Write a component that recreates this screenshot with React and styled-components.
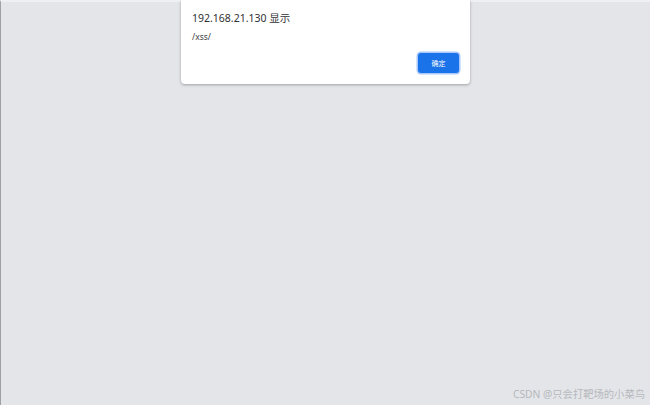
import React from 'react';
import styled, { createGlobalStyle } from 'styled-components';

const Global = createGlobalStyle`
  html, body {
    margin: 0;
    padding: 0;
    width: 650px;
    height: 405px;
    overflow: hidden;
    font-family: "Noto Sans", "Noto Sans CJK SC", sans-serif;
  }
`;

const Page = styled.div`
  position: relative;
  width: 650px;
  height: 405px;
  background: #e4e5e9;
  border-left: 1px solid #9ea1a6;
  border-top: 2px solid #eef0f2;
  box-sizing: border-box;
  display: flex;
  justify-content: flex-start;
`;

const Dialog = styled.div`
  margin-left: 180px;
  width: 289px;
  height: 84px;
  margin-top: -2px;
  background: #fff;
  border-radius: 0 0 4px 4px;
  box-shadow: 0 1px 3px rgba(0, 0, 0, 0.3);
  padding: 11px 10px 0 11px;
  box-sizing: border-box;
  display: flex;
  flex-direction: column;
`;

const Title = styled.div`
  font-family: "Noto Sans", "Noto Sans CJK SC", sans-serif;
  font-size: 10.5px;
  color: #303134;
  line-height: 14px;
`;

const Message = styled.div`
  font-family: "Noto Sans", sans-serif;
  font-size: 8.5px;
  color: #3c4043;
  margin-top: 6px;
  line-height: 11px;
`;

const Actions = styled.div`
  display: flex;
  justify-content: flex-end;
  margin-top: 11px;
`;

const Button = styled.button`
  width: 41px;
  height: 20px;
  background: #1a73e8;
  border: none;
  border-radius: 3px;
  box-shadow: 0 0 0 1.5px #a8c7fa;
  color: #fff;
  font-family: "Noto Sans CJK SC", sans-serif;
  font-size: 7px;
  padding: 0;
  margin-right: 1px;
`;

const Watermark = styled.div`
  position: absolute;
  right: 5px;
  bottom: 4px;
  font-family: "Noto Sans", "Noto Sans CJK SC", sans-serif;
  font-size: 10.3px;
  color: #b5b8bc;
`;

export default function App() {
  return (
    <>
      <Global />
      <Page>
        <Dialog>
          <Title>192.168.21.130 显示</Title>
          <Message>/xss/</Message>
          <Actions>
            <Button>确定</Button>
          </Actions>
        </Dialog>
        <Watermark>CSDN @只会打靶场的小菜鸟</Watermark>
      </Page>
    </>
  );
}
